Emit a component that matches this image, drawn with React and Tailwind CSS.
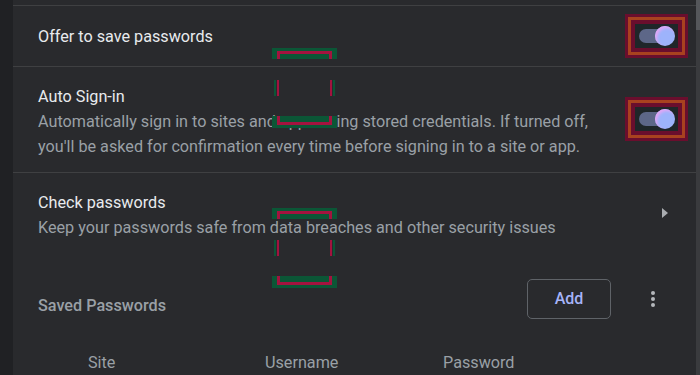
import React from "react";

const font = { fontFamily: "Roboto, 'Noto Sans', sans-serif" };

// the highlight frame someone drew round each toggle
const Toggle = () => (
  <div className="w-[63px] h-[44px] bg-[#6a0e2d] p-[3px]">
    <div className="w-full h-full border-[3px] border-[#a8421f] p-[4px]">
      <div className="w-full h-full bg-[#1f2629] flex items-center justify-center">
        <div className="relative w-[36px] h-[20px] flex items-center">
          <div className="w-[32px] h-[14px] rounded-full bg-[#5d6788]" />
          <div className="absolute right-0 top-0 w-[20px] h-[20px] rounded-full bg-[#9db3fb] shadow-[inset_2px_2px_3px_#e3a6f5]" />
        </div>
      </div>
    </div>
  </div>
);

// the odd green/red marker boxes lying over the page
const Marker = ({ className }) => (
  <div className={"absolute w-[65px] pointer-events-none " + className}>
    <div className="h-[11px] bg-[#0b5636] px-[5px] pt-[3px]">
      <div className="h-full border-t-[3px] border-x-[3px] border-[#a3133f]" />
    </div>
    <div className="flex justify-between px-[2px] h-[57px] items-center">
      <div className="flex gap-[1px] h-[16px]">
        <div className="w-[2px] bg-[#0b5636]" />
        <div className="w-[2px] bg-[#a3133f]" />
      </div>
      <div className="flex gap-[1px] h-[16px]">
        <div className="w-[2px] bg-[#a3133f]" />
        <div className="w-[2px] bg-[#0b5636]" />
      </div>
    </div>
    <div className="h-[12px] bg-[#0b5636] px-[5px] pb-[3px]">
      <div className="h-full border-b-[3px] border-x-[3px] border-[#a3133f]" />
    </div>
  </div>
);

export default function App() {
  return (
    <div
      className="relative w-[700px] h-[375px] overflow-hidden flex bg-[#202124] text-[16.2px]"
      style={font}
    >
      <div className="w-[13px] shrink-0" />

      <div className="flex-1 bg-[#292a2d] flex flex-col pt-[5px]">
        {/* Offer to save */}
        <div className="border-t border-[#3f4042] h-[61px] flex items-center justify-between pl-[25px] pr-[8px]">
          <span className="text-[#e8eaed] pt-[2px]">Offer to save passwords</span>
          <Toggle />
        </div>

        {/* Auto sign-in */}
        <div className="border-t border-[#3f4042] h-[107px] flex items-center justify-between pl-[25px] pr-[8px]">
          <div className="leading-[25px] pt-[4px]">
            <div className="text-[#e8eaed]">Auto Sign-in</div>
            <div className="text-[#9aa0a6]">
              Automatically sign in to sites and apps using stored credentials. If turned off,
              <br />
              you'll be asked for confirmation every time before signing in to a site or app.
            </div>
          </div>
          <Toggle />
        </div>

        {/* Check passwords */}
        <div className="border-t border-[#3f4042] h-[80px] flex items-start justify-between pl-[25px] pr-[28px] pt-[17px]">
          <div className="leading-[25px]">
            <div className="text-[#e8eaed]">Check passwords</div>
            <div className="text-[#9aa0a6]">
              Keep your passwords safe from data breaches and other security issues
            </div>
          </div>
          <svg width="6" height="10" viewBox="0 0 6 10" className="mt-[18px]">
            <path d="M0 0 L6 5 L0 10 Z" fill="#a9acb0" />
          </svg>
        </div>

        {/* Saved passwords header */}
        <div className="h-[61px] flex items-center pl-[25px] pr-[41px] mt-[18px]">
          <span className="text-[#9aa0a6] font-medium mt-[13px] flex-1">Saved Passwords</span>
          <button className="w-[84px] h-[40px] rounded-[5px] border border-[#5f6368] text-[#a6b4f8] font-medium text-[16px]">
            Add
          </button>
          <div className="w-[44px] flex justify-end">
            <div className="flex flex-col gap-[2px] items-center w-[4px]">
              <div className="w-[4px] h-[4px] rounded-full bg-[#b4b7bb]" />
              <div className="w-[4px] h-[4px] rounded-full bg-[#b4b7bb]" />
              <div className="w-[4px] h-[4px] rounded-full bg-[#b4b7bb]" />
            </div>
          </div>
        </div>

        {/* Table heads */}
        <div className="flex text-[#9aa0a6] mt-[21px]">
          <div className="w-[75px]" />
          <div className="w-[177px]">Site</div>
          <div className="w-[178px]">Username</div>
          <div>Password</div>
        </div>
      </div>

      {/* scrollbar */}
      <div className="w-[4px] shrink-0 bg-[#3a3b3e] flex flex-col">
        <div className="h-[30px] bg-[#55575b]" />
      </div>

      <Marker className="left-[272px] top-[48px]" />
      <Marker className="left-[272px] top-[208px]" />
    </div>
  );
}
